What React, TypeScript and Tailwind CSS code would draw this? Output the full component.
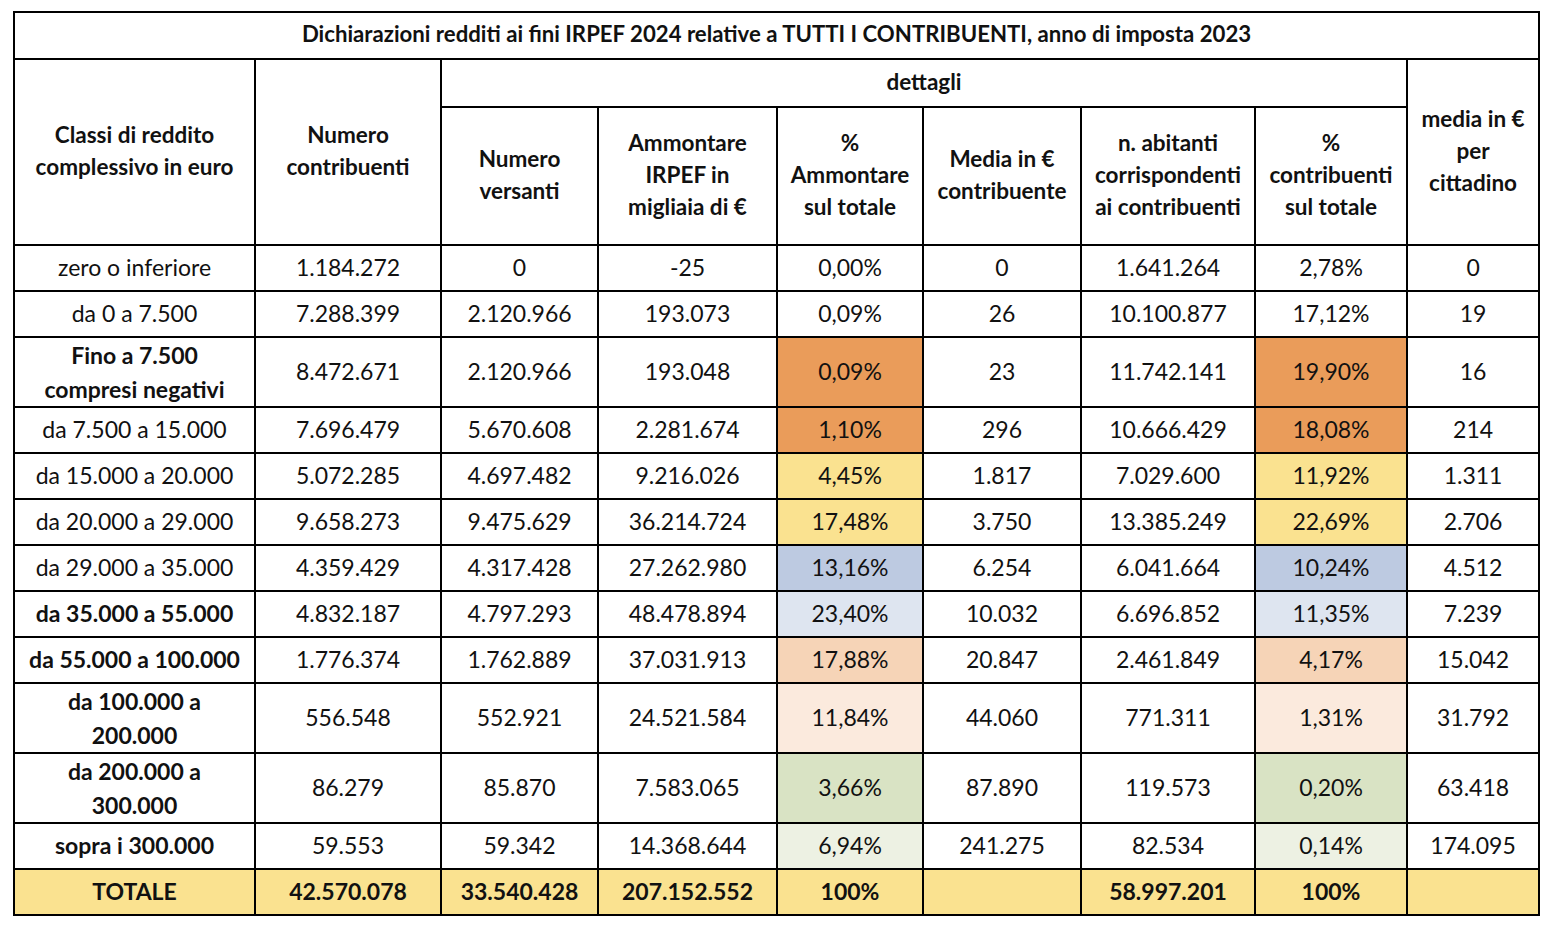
import React from "react";

type Row = {
  label: string[];
  bold?: boolean;
  tall?: boolean;
  values: string[];
  pctBg?: string;
};

const rows: Row[] = [
  { label: ["zero o inferiore"], values: ["1.184.272", "0", "-25", "0,00%", "0", "1.641.264", "2,78%", "0"] },
  { label: ["da 0 a 7.500"], values: ["7.288.399", "2.120.966", "193.073", "0,09%", "26", "10.100.877", "17,12%", "19"] },
  { label: ["Fino a 7.500", "compresi negativi"], bold: true, tall: true, pctBg: "bg-[#EA9C5A]", values: ["8.472.671", "2.120.966", "193.048", "0,09%", "23", "11.742.141", "19,90%", "16"] },
  { label: ["da 7.500 a 15.000"], pctBg: "bg-[#EA9C5A]", values: ["7.696.479", "5.670.608", "2.281.674", "1,10%", "296", "10.666.429", "18,08%", "214"] },
  { label: ["da 15.000 a 20.000"], pctBg: "bg-[#FAE290]", values: ["5.072.285", "4.697.482", "9.216.026", "4,45%", "1.817", "7.029.600", "11,92%", "1.311"] },
  { label: ["da 20.000 a 29.000"], pctBg: "bg-[#FAE290]", values: ["9.658.273", "9.475.629", "36.214.724", "17,48%", "3.750", "13.385.249", "22,69%", "2.706"] },
  { label: ["da 29.000 a 35.000"], pctBg: "bg-[#BDCAE1]", values: ["4.359.429", "4.317.428", "27.262.980", "13,16%", "6.254", "6.041.664", "10,24%", "4.512"] },
  { label: ["da 35.000 a 55.000"], bold: true, pctBg: "bg-[#DEE5F0]", values: ["4.832.187", "4.797.293", "48.478.894", "23,40%", "10.032", "6.696.852", "11,35%", "7.239"] },
  { label: ["da 55.000 a 100.000"], bold: true, pctBg: "bg-[#F6D4B7]", values: ["1.776.374", "1.762.889", "37.031.913", "17,88%", "20.847", "2.461.849", "4,17%", "15.042"] },
  { label: ["da 100.000 a", "200.000"], bold: true, tall: true, pctBg: "bg-[#FBEADD]", values: ["556.548", "552.921", "24.521.584", "11,84%", "44.060", "771.311", "1,31%", "31.792"] },
  { label: ["da 200.000 a", "300.000"], bold: true, tall: true, pctBg: "bg-[#D9E3C4]", values: ["86.279", "85.870", "7.583.065", "3,66%", "87.890", "119.573", "0,20%", "63.418"] },
  { label: ["sopra i 300.000"], bold: true, pctBg: "bg-[#EDF1E3]", values: ["59.553", "59.342", "14.368.644", "6,94%", "241.275", "82.534", "0,14%", "174.095"] },
];

const totals = ["42.570.078", "33.540.428", "207.152.552", "100%", "", "58.997.201", "100%", ""];

const cell = "border-2 border-black text-center align-middle p-0 whitespace-nowrap";
// single-line cells sit a bit high in the reference
const one = `${cell} pb-[3px]`;
const head = `${cell} pb-[3px] font-bold text-[22.5px] leading-[32px]`;

// one line per entry, the reference breaks headers by hand
const Lines = ({ lines }: { lines: string[] }) => (
  <>
    {lines.map((l, i) => (
      <div key={i}>{l}</div>
    ))}
  </>
);

const App = () => {
  return (
    <div className="min-h-screen bg-white pl-[13px] pt-[11px] text-[#111] font-['Lato','Liberation_Sans',sans-serif]">
      <table className="table-fixed border-collapse w-[1527px] text-[23px] leading-[34px]">
        <colgroup>
          <col className="w-[241px]" />
          <col className="w-[186px]" />
          <col className="w-[157px]" />
          <col className="w-[179px]" />
          <col className="w-[146px]" />
          <col className="w-[158px]" />
          <col className="w-[174px]" />
          <col className="w-[152px]" />
          <col className="w-[132px]" />
        </colgroup>
        <thead>
          <tr className="h-[47px]">
            <th colSpan={9} className={`${one} font-bold text-[22.2px]`}>
              Dichiarazioni redditi ai fini IRPEF 2024 relative a TUTTI I CONTRIBUENTI, anno di imposta 2023
            </th>
          </tr>
          <tr className="h-[48px]">
            <th rowSpan={2} className={head}>
              <Lines lines={["Classi di reddito", "complessivo in euro"]} />
            </th>
            <th rowSpan={2} className={head}>
              <Lines lines={["Numero", "contribuenti"]} />
            </th>
            <th colSpan={6} className={head}>
              dettagli
            </th>
            <th rowSpan={2} className={head}>
              <Lines lines={["media in €", "per", "cittadino"]} />
            </th>
          </tr>
          <tr className="h-[138px]">
            <th className={head}>
              <Lines lines={["Numero", "versanti"]} />
            </th>
            <th className={head}>
              <Lines lines={["Ammontare", "IRPEF in", "migliaia di €"]} />
            </th>
            <th className={head}>
              <Lines lines={["%", "Ammontare", "sul totale"]} />
            </th>
            <th className={head}>
              <Lines lines={["Media in €", "contribuente"]} />
            </th>
            <th className={head}>
              <Lines lines={["n. abitanti", "corrispondenti", "ai contribuenti"]} />
            </th>
            <th className={head}>
              <Lines lines={["%", "contribuenti", "sul totale"]} />
            </th>
          </tr>
        </thead>
        <tbody>
          {rows.map((r) => (
            <tr key={r.label.join(" ")} className={r.tall ? "h-[70px]" : "h-[46px]"}>
              <td className={`${r.tall ? cell : one} ${r.bold ? "font-bold" : ""}`}>
                <Lines lines={r.label} />
              </td>
              {r.values.map((v, i) => (
                <td key={i} className={`${one} ${(i === 3 || i === 6) && r.pctBg ? r.pctBg : ""}`}>
                  {v}
                </td>
              ))}
            </tr>
          ))}
          <tr className="h-[46px] bg-[#FAE290] font-bold">
            <td className={one}>TOTALE</td>
            {totals.map((v, i) => (
              <td key={i} className={one}>
                {v}
              </td>
            ))}
          </tr>
        </tbody>
      </table>
    </div>
  );
};

export default App;
